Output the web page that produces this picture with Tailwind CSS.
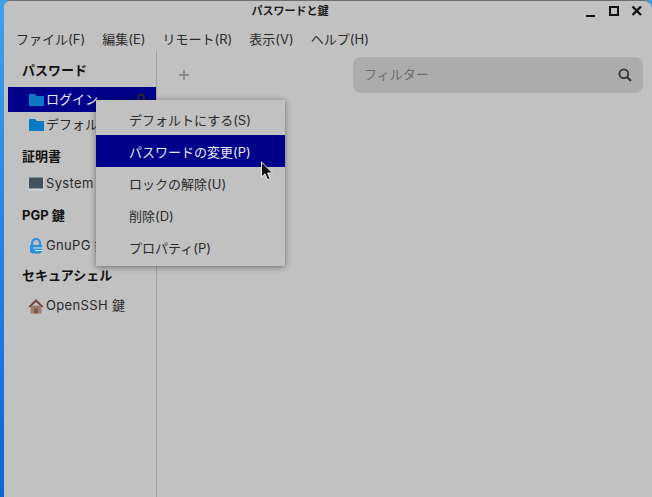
<!DOCTYPE html>
<html lang="ja">
<head>
    <meta charset="UTF-8">
    <title>パスワードと鍵</title>
    <script src="https://cdn.jsdelivr.net/npm/@tailwindcss/browser@4"></script>
</head>
<body class="bg-linear-to-b from-[#3fa0ea] to-[#0a64d8] overflow-hidden">
    <div class="relative w-[652px] h-[497px] pl-[4px] font-['Inter','Noto_Sans_CJK_JP',sans-serif] text-[13px] text-[#2a2a2a]">
        <div class="flex flex-col h-full bg-[#c1c1c1] rounded-tl-[6px] rounded-tr-[8px] border-t border-[#6e6e6e]">
            <!-- title bar -->
            <div class="relative flex items-center justify-center h-[20px] shrink-0 text-[11px] font-bold text-[#1c1c1c]">
                <span class="ml-[-76px]">パスワードと鍵</span>
                <div class="absolute right-[9px] top-[3px] flex items-center gap-[11px]">
                    <svg width="12" height="14" viewBox="0 0 12 14"><path d="M1 12h9" stroke="#111" stroke-width="2"/></svg>
                    <svg width="12" height="14" viewBox="0 0 12 14"><rect x="2" y="3" width="8" height="8" fill="none" stroke="#111" stroke-width="2"/></svg>
                    <svg width="12" height="14" viewBox="0 0 12 14"><path d="M1.5 2.5l8.5 8.5M10 2.5L1.5 11" stroke="#111" stroke-width="2.4"/></svg>
                </div>
            </div>
            <!-- menu bar -->
            <div class="flex items-center h-[30px] pt-[8px] shrink-0 pl-[12px] gap-[17px]">
                <span>ファイル(F)</span>
                <span>編集(E)</span>
                <span>リモート(R)</span>
                <span>表示(V)</span>
                <span>ヘルプ(H)</span>
            </div>
            <div class="flex flex-1 min-h-0">
                <!-- sidebar -->
                <div class="w-[153px] shrink-0 border-r border-[#a3a3a3] pt-[5px]">
                    <h2 class="h-[29px] mb-[2px] pl-[18px] flex items-center font-bold text-[#111]">パスワード</h2>
                    <div class="flex items-center h-[25px] ml-[4px] pl-[21px] gap-[2px] bg-[#00008b] text-[#e8e8f4]">
                        <svg width="15" height="14" viewBox="0 0 15 14"><path d="M0 1h6l2 2h7v10H0z" fill="#0c79c6"/></svg>
                        <span>ログイン</span>
                        <svg class="ml-auto mr-[9px]" width="12" height="14" viewBox="0 0 12 14"><path d="M3 7V4.5a3 3 0 0 1 6 0V7" fill="none" stroke="#2a2a20" stroke-width="1.8"/><rect x="1.5" y="6.5" width="9" height="7" fill="#2a2a20"/></svg>
                    </div>
                    <div class="flex items-center h-[26px] ml-[4px] pl-[21px] gap-[2px]">
                        <svg width="15" height="14" viewBox="0 0 15 14"><path d="M0 1h6l2 2h7v10H0z" fill="#0c79c6"/></svg>
                        <span>デフォルト</span>
                    </div>
                    <h2 class="h-[32px] mt-[3px] pl-[18px] flex items-center font-bold text-[#111]">証明書</h2>
                    <div class="flex items-center h-[22px] pl-[24px] gap-[2px]">
                        <svg width="16" height="14" viewBox="0 0 16 14"><rect x="0.5" y="0.5" width="15" height="13" fill="#d6dadd"/><rect x="1" y="0.5" width="14" height="11" fill="#44505c"/></svg>
                        <span class="tracking-[0.35px]">Systemトラスト</span>
                    </div>
                    <h2 class="h-[32px] mt-[5px] pl-[18px] flex items-center font-bold text-[#111]">PGP 鍵</h2>
                    <div class="flex items-center h-[28px] pl-[24px] gap-[2px]">
                        <svg width="16" height="16" viewBox="0 0 16 16"><path d="M4 7.5V5a4 4 0 0 1 8 0v2.5" fill="none" stroke="#2a8fe0" stroke-width="2.2"/><path d="M2 7h12v6.5L12 15.5H4L2 13.5z" fill="#2a8fe0"/><path d="M5 10h9M7 12.5h7" stroke="#dcecf8" stroke-width="1"/></svg>
                        <span class="tracking-[0.35px]">GnuPG 鍵</span>
                    </div>
                    <h2 class="h-[32px] pl-[18px] flex items-center font-bold text-[#111]">セキュアシェル</h2>
                    <div class="flex items-center h-[28px] pl-[24px] gap-[2px]">
                        <svg width="16" height="16" viewBox="0 0 16 16"><path d="M2.5 7.5h11v8h-11z" fill="#a17c70"/><path d="M0.5 8.5L8 1l7.5 7.5-1.5 1L8 4 2 9.5z" fill="#6d4a3e"/><path d="M6.2 10.5h3.6v5H6.2z" fill="#7c5a4e"/></svg>
                        <span class="tracking-[0.35px]">OpenSSH 鍵</span>
                    </div>
                </div>
                <!-- content -->
                <div class="flex-1 min-w-0">
                    <div class="flex items-center justify-between pt-[6px] pl-[21px] pr-[9px]">
                        <svg width="12" height="12" viewBox="0 0 12 12"><path d="M6 1v10M1 6h10" stroke="#7b7b7b" stroke-width="1.4"/></svg>
                        <div class="flex items-center justify-between w-[290px] h-[36px] rounded-[8px] bg-[#acacac] pl-[11px] pr-[11px] text-[#6c6c6c]">
                            <span>フィルター</span>
                            <svg width="14" height="14" viewBox="0 0 14 14"><circle cx="5.8" cy="5.8" r="4.4" fill="none" stroke="#333" stroke-width="1.8"/><path d="M9 9l4 4" stroke="#333" stroke-width="2.2"/></svg>
                        </div>
                    </div>
                </div>
            </div>
        </div>
        <!-- context menu -->
        <div class="absolute left-[96px] top-[100px] w-[189px] h-[166px] py-[3px] bg-[#c1c1c1] shadow-[0_1px_6px_rgba(0,0,0,0.45)] text-[#2a2a2a]">
            <div class="flex items-center h-[32px] pl-[33px] pt-[3px]">デフォルトにする(S)</div>
            <div class="flex items-center h-[32px] pl-[33px] pt-[3px] bg-[#00008b] text-[#e8e8f4]">パスワードの変更(P)</div>
            <div class="flex items-center h-[32px] pl-[33px] pt-[3px]">ロックの解除(U)</div>
            <div class="flex items-center h-[32px] pl-[33px] pt-[3px]">削除(D)</div>
            <div class="flex items-center h-[32px] pl-[33px] pt-[3px]">プロパティ(P)</div>
        </div>
        <!-- mouse cursor -->
        <svg class="absolute left-[260px] top-[161px]" width="15" height="21" viewBox="0 0 15 21"><path d="M1.5 1v15l3.5-3.2 2.5 6 2.6-1.1-2.5-5.7h5z" fill="#111" stroke="#f0f0f0" stroke-width="1"/></svg>
    </div>
</body>
</html>
